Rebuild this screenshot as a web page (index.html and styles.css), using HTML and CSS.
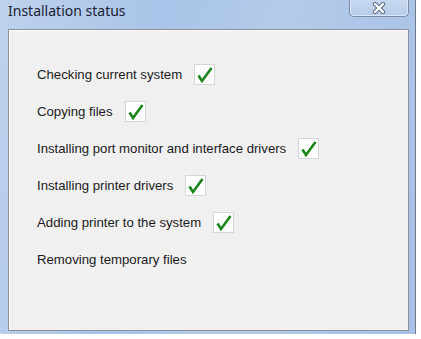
FILE: index.html
```html
<!DOCTYPE html>
<html lang="en">
<head>
  <meta charset="UTF-8">
  <title>Installation status</title>
  <link rel="stylesheet" href="styles.css">
</head>
<body>

  <div class="window">
    <div class="titlebar">
      <div class="title">Installation status</div>
      <div class="close-btn">
        <svg width="14" height="12" viewBox="0 0 14 12">
          <path d="M3 2 L11 10 M11 2 L3 10" stroke="#5d6b80" stroke-width="4.4" stroke-linecap="round"/>
          <path d="M3 2 L11 10 M11 2 L3 10" stroke="#ffffff" stroke-width="2.4" stroke-linecap="round"/>
        </svg>
      </div>
    </div>

    <div class="panel">
      <div class="step">
        <span class="label">Checking current system</span>
        <span class="check"><svg width="21" height="21" viewBox="0 0 21 21"><path d="M4.5 11.5 L8 17 L17.5 4" /></svg></span>
      </div>
      <div class="step">
        <span class="label">Copying files</span>
        <span class="check"><svg width="21" height="21" viewBox="0 0 21 21"><path d="M4.5 11.5 L8 17 L17.5 4" /></svg></span>
      </div>
      <div class="step">
        <span class="label">Installing port monitor and interface drivers</span>
        <span class="check"><svg width="21" height="21" viewBox="0 0 21 21"><path d="M4.5 11.5 L8 17 L17.5 4" /></svg></span>
      </div>
      <div class="step">
        <span class="label">Installing printer drivers</span>
        <span class="check"><svg width="21" height="21" viewBox="0 0 21 21"><path d="M4.5 11.5 L8 17 L17.5 4" /></svg></span>
      </div>
      <div class="step">
        <span class="label">Adding printer to the system</span>
        <span class="check"><svg width="21" height="21" viewBox="0 0 21 21"><path d="M4.5 11.5 L8 17 L17.5 4" /></svg></span>
      </div>
      <div class="step">
        <span class="label">Removing temporary files</span>
      </div>
    </div>
  </div>

</body>
</html>
```

FILE: styles.css
```css
body {
  margin: 0;
  background: #ffffff;
  font-family: "Liberation Sans", Arial, sans-serif;
}

.window {
  width: 416px;
  height: 334px;
  border-right: 1px solid #6e7886;
  background: linear-gradient(100deg, #bdd2ec 0%, #a9c4e8 35%, #b3cbea 60%, #a7c2e6 100%);
  display: flex;
  flex-direction: column;
  padding: 0 6px 3px 8px;
  box-sizing: border-box;
  border-bottom-left-radius: 2px;
}

.titlebar {
  height: 29px;
  display: flex;
  align-items: flex-start;
  justify-content: space-between;
}

.title {
  font-family: "Noto Sans", sans-serif;
  font-size: 14px;
  line-height: 18px;
  color: #1b2233;
  margin-top: 2px;
}

.close-btn {
  width: 58px;
  height: 17px;
  margin-top: -1px;
  border: 1px solid #7d8ca3;
  border-top: none;
  border-radius: 0 0 5px 5px;
  background: linear-gradient(#c9daf0, #b4cbea);
  box-shadow: inset 0 -1px 0 #dbe7f6, inset 1px 0 0 #dbe7f6, inset -1px 0 0 #dbe7f6;
  display: flex;
  align-items: center;
  justify-content: center;
}

.panel {
  flex: 1;
  background: #f0f0f0;
  border: 1px solid #8d9096;
  box-shadow: inset 1px 1px 0 #ffffff;
  padding: 26px 0 0 28px;
}

.step {
  height: 37px;
  display: flex;
  align-items: center;
  gap: 12px;
}

.label {
  font-size: 13.2px;
  color: #1a1a1a;
}

.check {
  width: 21px;
  height: 21px;
  background: #ffffff;
  border: 1px solid #d3d7dc;
  box-sizing: border-box;
  display: flex;
}

.check svg {
  margin: -1px;
}

.check path {
  fill: none;
  stroke: #1a851a;
  stroke-width: 2.6;
  stroke-linejoin: miter;
}
```
